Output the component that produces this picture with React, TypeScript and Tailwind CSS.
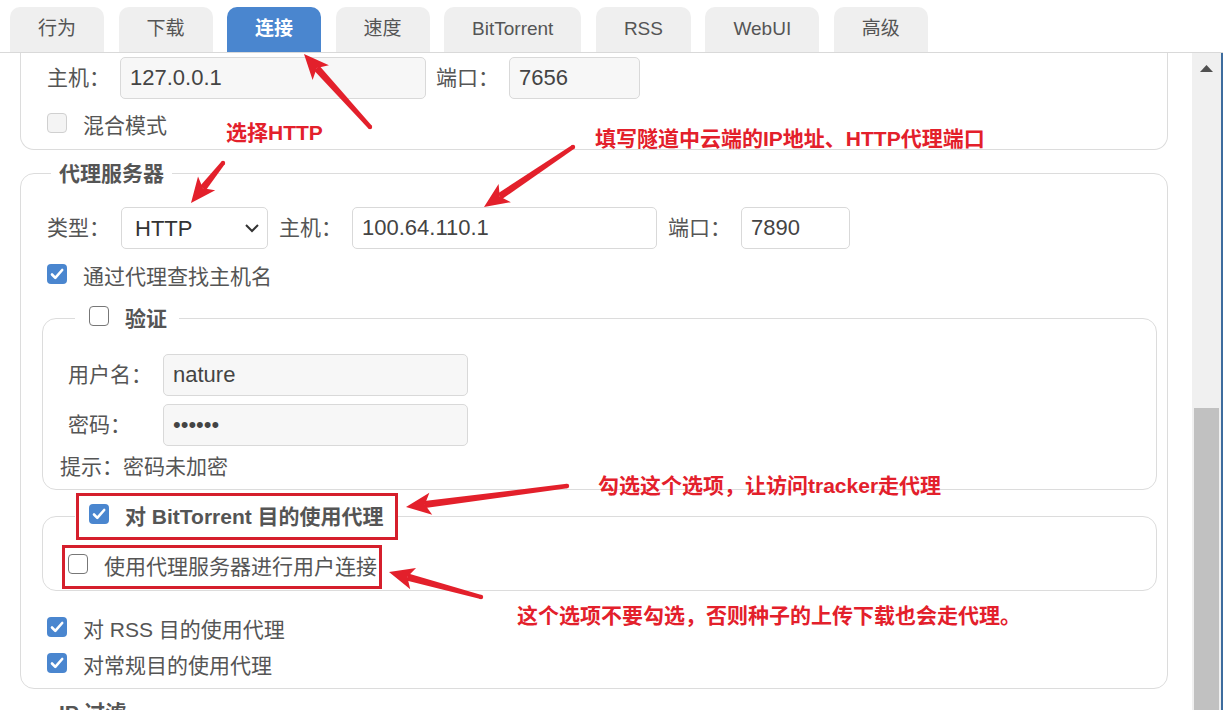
import React from 'react'

const tabs = ['行为', '下载', '连接', '速度', 'BitTorrent', 'RSS', 'WebUI', '高级']

function Checkbox({ checked, disabled }: { checked?: boolean; disabled?: boolean }) {
  if (checked) {
    return (
      <span className="mb-[6px] flex h-[20px] w-[20px] shrink-0 items-center justify-center rounded-[4px] bg-[#4a86cf]">
        <svg viewBox="0 0 20 20" className="h-[20px] w-[20px]">
          <path d="M5 10.5l3.3 3.4L15.2 6" stroke="white" strokeWidth="2.6" fill="none" strokeLinecap="round" strokeLinejoin="round" />
        </svg>
      </span>
    )
  }
  return (
    <span
      className={
        disabled
          ? 'mb-[6px] block h-[20px] w-[20px] shrink-0 rounded-[4px] border-[1.5px] border-[#d0d0d0] bg-[#f4f4f4]'
          : 'mb-[6px] block h-[20px] w-[20px] shrink-0 rounded-[4px] border-[1.5px] border-[#777] bg-white'
      }
    />
  )
}

function CheckRow({ label, checked, disabled, className = '' }: { label: string; checked?: boolean; disabled?: boolean; className?: string }) {
  return (
    <div className={`flex h-[30px] items-center gap-[16px] ${className}`}>
      <Checkbox checked={checked} disabled={disabled} />
      <span className="text-[21px] text-[#555]">{label}</span>
    </div>
  )
}

function Field({ value, w, disabled }: { value: string; w: string; disabled?: boolean }) {
  return (
    <input
      readOnly
      value={value}
      className={`h-[42px] ${w} rounded-[5px] border border-[#d9d9d9] pl-[9px] text-[22px] text-[#444] outline-none ${disabled ? 'bg-[#f7f7f7]' : 'bg-white'}`}
    />
  )
}

function Arrow({ a }: { a: number[] }) {
  const [x1, y1, x2, y2] = a
  const dx = x2 - x1
  const dy = y2 - y1
  const len = Math.hypot(dx, dy)
  const ux = dx / len
  const uy = dy / len
  const px = -uy
  const py = ux
  const L = 25
  const W = 11
  const bx = x2 - ux * L
  const by = y2 - uy * L
  const nx = bx + ux * 6
  const ny = by + uy * 6
  const shaft = `${x1 + px * 2.2},${y1 + py * 2.2} ${nx + px * 3.6},${ny + py * 3.6} ${nx - px * 3.6},${ny - py * 3.6} ${x1 - px * 2.2},${y1 - py * 2.2}`
  const head = `${x2},${y2} ${bx + px * W},${by + py * W} ${nx},${ny} ${bx - px * W},${by - py * W}`
  return (
    <g fill="#e3202b">
      <polygon points={shaft} />
      <circle cx={x1} cy={y1} r={2.2} />
      <polygon points={head} />
    </g>
  )
}

const arrows = [
  [370, 127, 304, 54],
  [223, 163, 191, 203],
  [573, 147, 484, 207],
  [567, 486, 406, 507],
  [481, 597, 389, 572],
]

export default function App() {
  return (
    <div className="relative flex h-[710px] w-[1223px] flex-col overflow-hidden bg-white font-['Liberation_Sans','Noto_Sans_CJK_SC',sans-serif]">
      <div className="flex h-[53px] shrink-0 items-end gap-[14.5px] border-b border-[#d9d9d9] pl-[10px]">
        {tabs.map((t) => (
          <div
            key={t}
            className={
              t === '连接'
                ? 'flex h-[45px] items-center rounded-t-[10px] bg-[#4a86cf] px-[28px] text-[19px] font-bold text-white'
                : 'flex h-[45px] items-center rounded-t-[10px] bg-[#efefef] px-[28px] text-[19px] text-[#555]'
            }
          >
            {t}
          </div>
        ))}
      </div>

      <div className="flex min-h-0 flex-1">
        <div className="min-w-0 flex-1 overflow-hidden pl-[20px] pr-[24px]">
          <div className="rounded-b-[14px] border-x border-b border-[#dcdcdc] pb-[8px] pl-[26px] pt-[4px]">
            <div className="flex items-center">
              <span className="w-[73px] shrink-0 text-[21px] text-[#555]">主机：</span>
              <Field value="127.0.0.1" w="w-[306px]" disabled />
              <span className="ml-[10px] w-[73px] shrink-0 text-[21px] text-[#555]">端口：</span>
              <Field value="7656" w="w-[131px]" disabled />
            </div>
            <CheckRow label="混合模式" disabled className="mt-[12px]" />
          </div>

          <fieldset className="mt-[10px] rounded-[14px] border border-[#dcdcdc] pb-[7px] pl-[26px] pr-[10px] pt-[20px]">
            <legend className="ml-[4px] px-[8px] text-[21px] font-bold leading-[27px] text-[#555]">代理服务器</legend>
            <div className="flex items-center">
              <span className="w-[74px] shrink-0 text-[21px] text-[#555]">类型：</span>
              <div className="flex h-[42px] w-[147px] items-center justify-between rounded-[5px] border border-[#d9d9d9] bg-white pl-[13px] pr-[7px] text-[22px] text-[#333]">
                <span>HTTP</span>
                <svg viewBox="0 0 16 10" className="h-[10px] w-[16px]">
                  <path d="M2 2l6 6 6-6" stroke="#333" strokeWidth="2" fill="none" />
                </svg>
              </div>
              <span className="ml-[11px] w-[73px] shrink-0 text-[21px] text-[#555]">主机：</span>
              <Field value="100.64.110.1" w="w-[305px]" />
              <span className="ml-[11px] w-[73px] shrink-0 text-[21px] text-[#555]">端口：</span>
              <Field value="7890" w="w-[109px]" />
            </div>
            <CheckRow label="通过代理查找主机名" checked className="mt-[13px]" />

            <fieldset className="-ml-[5px] mt-[13px] rounded-[14px] border border-[#dcdcdc] pb-[7px] pl-[17px] pt-[22px]">
              <legend className="ml-[15px] px-[12px] pl-[14px]">
                <span className="flex h-[27px] items-center gap-[16px]">
                  <Checkbox />
                  <span className="text-[21px] font-bold text-[#555]">验证</span>
                </span>
              </legend>
              <div className="flex items-center pl-[8px]">
                <span className="w-[95px] shrink-0 text-[21px] text-[#555]">用户名：</span>
                <Field value="nature" w="w-[305px]" disabled />
              </div>
              <div className="mt-[8px] flex items-center pl-[8px]">
                <span className="w-[95px] shrink-0 text-[21px] text-[#555]">密码：</span>
                <Field value="••••••" w="w-[305px]" disabled />
              </div>
              <div className="mt-[6px] flex h-[30px] items-center text-[21px] text-[#555]">提示：密码未加密</div>
            </fieldset>

            <fieldset className="-ml-[5px] mt-[13px] rounded-[14px] border border-[#dcdcdc] pb-[8px] pl-[17px] pt-[22px]">
              <legend className="ml-[15px] px-[12px] pl-[14px]">
                <span className="flex h-[27px] items-center gap-[16px]">
                  <Checkbox checked />
                  <span className="text-[21px] font-bold text-[#555]">对 BitTorrent 目的使用代理</span>
                </span>
              </legend>
              <div className="pl-[8px]">
                <CheckRow label="使用代理服务器进行用户连接" />
              </div>
            </fieldset>

            <CheckRow label="对 RSS 目的使用代理" checked className="mt-[24px]" />
            <CheckRow label="对常规目的使用代理" checked className="mt-[6px]" />
          </fieldset>

          <fieldset className="mt-[10px] h-[80px] rounded-[14px] border border-[#dcdcdc] pl-[26px] pr-[10px]">
            <legend className="ml-[4px] px-[8px] text-[21px] font-bold leading-[27px] text-[#555]">IP 过滤</legend>
          </fieldset>
        </div>

        <div className="flex w-[29px] shrink-0 flex-col bg-[#f0f0f0]">
          <div className="flex h-[31px] items-center justify-center">
            <svg viewBox="0 0 13 7" className="h-[7px] w-[13px]">
              <path d="M0 7L6.5 0L13 7z" fill="#505050" />
            </svg>
          </div>
          <div className="flex-1" />
          <div className="mx-[2px] h-[302px] bg-[#c1c1c1]" />
        </div>
        <div className="w-[2px] shrink-0 bg-[#3d6c9e]" />
      </div>

      <div className="pointer-events-none absolute left-[76px] top-[493px] h-[47px] w-[322px] border-[3px] border-[#d51f2c]" />
      <div className="pointer-events-none absolute left-[62px] top-[545px] h-[44px] w-[320px] border-[3px] border-[#d51f2c]" />

      <div className="pointer-events-none absolute left-[226px] top-[118px] text-[21px] font-bold leading-[30px] text-[#e3202b]">选择HTTP</div>
      <div className="pointer-events-none absolute left-[595px] top-[124px] text-[21px] font-bold leading-[30px] text-[#e3202b]">填写隧道中云端的IP地址、HTTP代理端口</div>
      <div className="pointer-events-none absolute left-[598px] top-[471px] text-[21px] font-bold leading-[30px] text-[#e3202b]">勾选这个选项，让访问tracker走代理</div>
      <div className="pointer-events-none absolute left-[517px] top-[601px] text-[21px] font-bold leading-[30px] text-[#e3202b]">这个选项不要勾选，否则种子的上传下载也会走代理。</div>

      <svg className="pointer-events-none absolute left-0 top-0 h-[710px] w-[1223px]" viewBox="0 0 1223 710">
        {arrows.map((a, i) => (
          <Arrow key={i} a={a} />
        ))}
      </svg>
    </div>
  )
}
